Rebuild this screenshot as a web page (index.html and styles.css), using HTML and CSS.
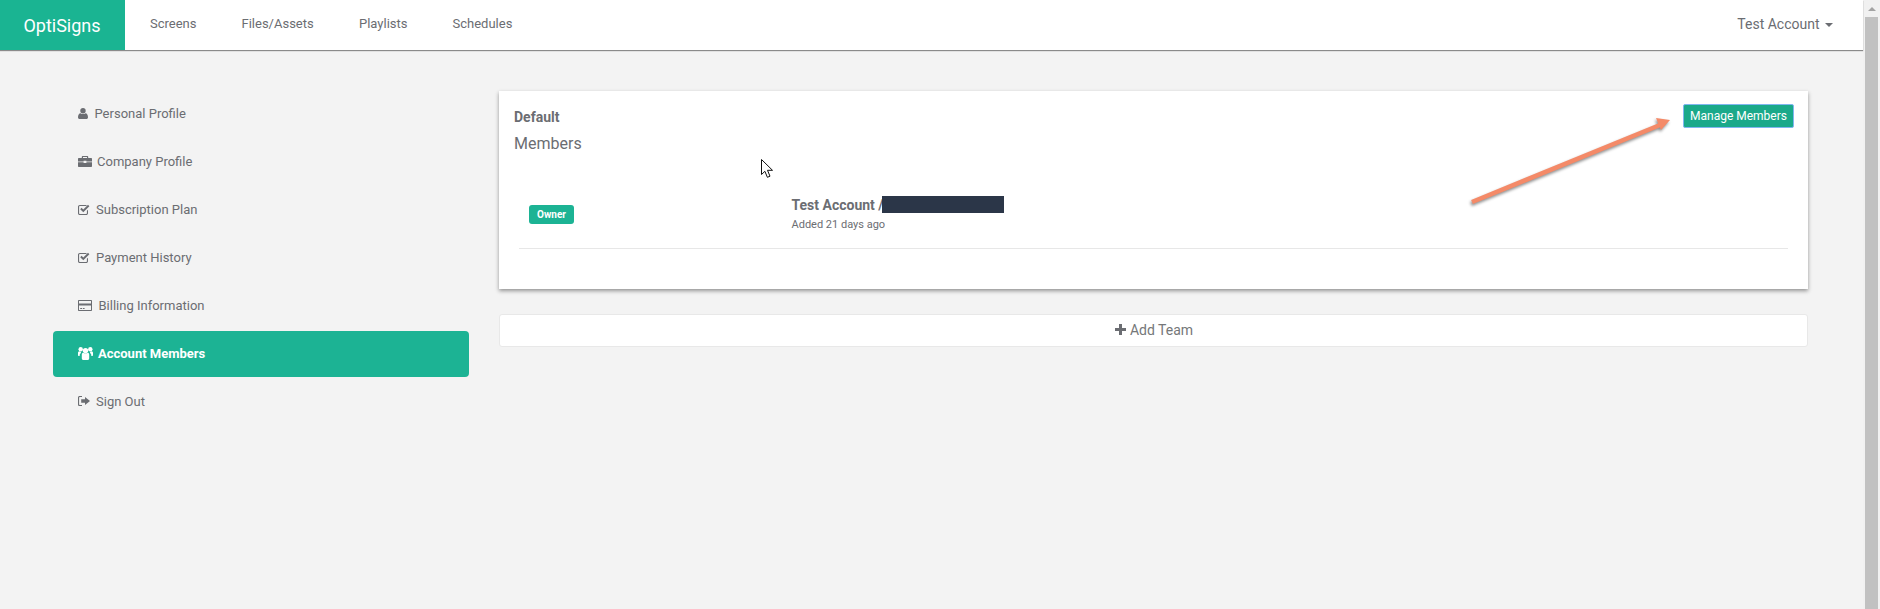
FILE: index.html
```html
<!DOCTYPE html>
<html lang="en">
<head>
<meta charset="utf-8">
<title>OptiSigns</title>
<link rel="stylesheet" href="styles.css">
</head>
<body>
<div class="page">
  <header class="nav">
    <a class="brand">OptiSigns</a>
    <ul class="menu">
      <li class="m-screens">Screens</li>
      <li class="m-files">Files/Assets</li>
      <li class="m-play">Playlists</li>
      <li class="m-sched">Schedules</li>
    </ul>
    <div class="account">Test Account <span class="caret"></span></div>
  </header>
  <main class="main">
    <ul class="side">
      <li class="side-item">
        <svg class="ic" width="10" height="11" viewBox="0 0 10 11"><circle cx="5" cy="2.8" r="2.7"/><path d="M0 9.2C0 6.8 1 5.4 2.6 5.2 3.3 5.8 4.1 6.1 5 6.1s1.7-.3 2.4-.9C9 5.4 10 6.8 10 9.2 10 10.3 9.3 11 8.3 11H1.700C.7 11 0 10.300 0 9.200Z"/></svg>
        <span class="t-user">Personal Profile</span>
      </li>
      <li class="side-item">
        <svg class="ic" width="14" height="11" viewBox="0 0 14 11"><path d="M5 2V1h4v1h1.200V.8c0-.5-.3-.8-.8-.8H4.600c-.5 0-.8.3-.8.8V2Z"/><path d="M1 2h12c.6 0 1 .4 1 1v2.400H8.400V4.800H5.600v.6H0V3c0-.6.4-1 1-1Z"/><path d="M0 6.200h5.600V7h2.800v-.8H14V10c0 .6-.4 1-1 1H1c-.6 0-1-.4-1-1Z"/></svg>
        <span class="t-case">Company Profile</span>
      </li>
      <li class="side-item">
        <svg class="ic" width="12" height="11" viewBox="0 0 12 11"><path d="M1.800 1H8.500v1.100H1.800c-.4 0-.7.3-.7.7v6.400c0 .4.300.7.700.7h6.400c.4 0 .7-.3.7-.7V6.800l1.100-1.100v3.500c0 1-.8 1.800-1.800 1.800H1.800C.8 11 0 10.200 0 9.200V2.800C0 1.800.8 1 1.800 1Z"/><path d="M2.200 5.200 3.600 3.800 5.300 5.500 10 .8 11.400 2.200 5.300 8.300Z"/></svg>
        <span class="t-check">Subscription Plan</span>
      </li>
      <li class="side-item">
        <svg class="ic" width="12" height="11" viewBox="0 0 12 11"><path d="M1.800 1H8.500v1.100H1.800c-.4 0-.7.3-.7.7v6.400c0 .4.300.7.700.7h6.400c.4 0 .7-.3.7-.7V6.800l1.100-1.100v3.500c0 1-.8 1.800-1.800 1.800H1.800C.8 11 0 10.200 0 9.200V2.800C0 1.800.8 1 1.800 1Z"/><path d="M2.200 5.200 3.600 3.800 5.300 5.500 10 .8 11.400 2.200 5.300 8.300Z"/></svg>
        <span class="t-check">Payment History</span>
      </li>
      <li class="side-item">
        <svg class="ic" width="14" height="11" viewBox="0 0 14 11"><path fill-rule="evenodd" d="M1 0h12c.6 0 1 .4 1 1v9c0 .6-.4 1-1 1H1c-.6 0-1-.4-1-1V1c0-.6.4-1 1-1ZM1 3.400h12V1H1ZM1 5.400V10h12V5.400ZM2.200 8h1.800v1H2.200Zm2.600 0h1.800v1H4.800Z"/></svg>
        <span class="t-card">Billing Information</span>
      </li>
      <li class="side-item active">
        <svg class="ic" width="15" height="13" viewBox="0 0 15 13"><circle cx="7.500" cy="3.600" r="2.700"/><circle cx="2.700" cy="2.300" r="2.200"/><circle cx="12.300" cy="2.300" r="2.200"/><path d="M3.800 7.400c0-1 .7-1.700 1.500-1.700.6.400 1.400.6 2.200.6s1.600-.2 2.200-.6c.8 0 1.500.7 1.500 1.700v3.800c0 1-.7 1.800-1.700 1.800H5.500c-1 0-1.700-.8-1.700-1.800Z"/><path d="M0 5.800C0 4.900.6 4.400 1.300 4.300c.4.300.9.500 1.400.5.300.5.400 1 .2 1.500-.8.300-1.200 1-1.200 1.800v.8H1c-.6 0-1-.4-1-1Z"/><path d="M15 5.800c0-.9-.6-1.400-1.300-1.500-.4.300-.9.500-1.400.5-.3.500-.4 1-.2 1.500.8.300 1.200 1 1.200 1.800v.8H14c.6 0 1-.4 1-1Z"/></svg>
        <span class="t-users">Account Members</span>
      </li>
      <li class="side-item">
        <svg class="ic" width="12" height="10" viewBox="0 0 12 10"><path d="M1.600 0H4v1.100H1.800c-.4 0-.7.3-.7.7v6.400c0 .4.300.7.700.7H4V10H1.600C.7 10 0 9.300 0 8.400V1.600C0 .7.700 0 1.600 0Z"/><path d="M7 1 12 5 7 9V6.700H3.200V3.300H7Z"/></svg>
        <span class="t-out">Sign Out</span>
      </li>
    </ul>
    <section class="content">
      <div class="card">
        <div class="card-head">
          <div class="titles">
            <div class="team">Default</div>
            <div class="sub">Members</div>
          </div>
          <button class="manage">Manage Members</button>
        </div>
        <div class="member">
          <div class="role"><span class="badge">Owner</span></div>
          <div class="who">
            <div class="name">Test Account /<span class="redact"></span></div>
            <div class="added">Added 21 days ago</div>
          </div>
        </div>
        <svg class="cursor" width="13" height="20" viewBox="0 0 13 20"><path d="M.5.5v15l3.400-3.200 2.500 6 2.600-1.100-2.500-5.900H11.500Z" fill="#fff" stroke="#111" stroke-width="1"/></svg>
        <svg class="arrow" width="210" height="95" viewBox="0 0 210 95"><path d="M4 92 192 15" stroke="#f48a68" stroke-width="4.500" fill="none"/><path d="M202 10 188 8 193 20Z" fill="#f48a68"/></svg>
      </div>
      <button class="add"><svg class="plus" width="11" height="11" viewBox="0 0 11 11"><path d="M4 0h3v4h4v3H7v4H4V7H0V4h4Z"/></svg> Add Team</button>
    </section>
  </main>
</div>
<div class="scrollbar">
  <div class="sb-up"><span class="sb-tri"></span></div>
  <div class="sb-thumb"></div>
</div>
</body>
</html>
```
FILE: styles.css
```css
* { box-sizing: border-box; }
html, body { margin: 0; height: 100%; overflow: hidden; }
body { display: flex; background: #f3f3f3; font-family: Roboto, "Liberation Sans", sans-serif; color: #6b6d72; font-size: 13px; }
ul { list-style: none; margin: 0; padding: 0; }
.page { flex: 1; min-width: 0; }

.nav { height: 50px; display: flex; align-items: stretch; background: #fff; box-shadow: 0 1px 1px #8a8a8a; position: relative; }
.brand { width: 125px; background: #1ab492; color: #fff; font-size: 18px; display: flex; align-items: center; justify-content: center; padding-right: 1px; }
.menu { display: flex; padding-left: 25px; font-size: 13px; padding-bottom: 3px; align-items: center; }
.m-screens { width: 91.5px; }
.m-files { width: 117.5px; }
.m-play { width: 93.5px; }
.account { margin-left: auto; padding-right: 30px; align-self: center; font-size: 14px; padding-bottom: 2px; }
.caret { display: inline-block; width: 0; height: 0; margin-left: 2px; vertical-align: middle; border-left: 4px solid transparent; border-right: 4px solid transparent; border-top: 4px solid #6b6d72; }

.main { display: flex; padding: 41px 55px 0 53px; }
.side { width: 416px; margin-right: 30px; display: flex; flex-direction: column; gap: 2px; flex: none; }
.side-item { height: 46px; display: flex; align-items: center; padding: 0 0 2px 25px; border-radius: 4px; }
.side-item .ic { fill: #6b6d72; flex: none; }
.t-user { margin-left: 6.5px; }
.t-case { margin-left: 5px; }
.t-check { margin-left: 6px; }
.t-card { margin-left: 6.5px; }
.t-users { margin-left: 5px; }
.t-out { margin-left: 6px; }
.active { background: #1cb394; color: #fff; font-weight: 700; }
.side-item.active .ic { fill: #fff; }

.content { flex: 1; min-width: 0; }
.card { position: relative; height: 198px; background: #fff; box-shadow: 0 2px 4px rgba(0, 0, 0, .4); padding: 13px 14px 0 15px; }
.card-head { display: flex; justify-content: space-between; align-items: flex-start; height: 58px; }
.team { font-weight: 700; font-size: 14px; line-height: 26px; }
.sub { font-size: 16px; line-height: 26px; margin-top: 1px; }
.manage { margin: 0; width: 111px; height: 24px; padding: 0; border: 1px solid #7fb6f0; border-radius: 2px; background: #1aa98a; color: #fff; font: 400 12px Roboto, sans-serif; }

.member { display: flex; margin: 0 6px 0 5px; height: 87px; padding-top: 34px; border-bottom: 1px solid #e7e7e7; }
.role { width: 272.500px; padding-left: 10px; padding-top: 9px; }
.badge { display: inline-flex; align-items: center; justify-content: center; width: 45px; height: 19px; border-radius: 3px; background: #1cb394; color: #fff; font-size: 10px; font-weight: 700; }
.name { display: flex; font-size: 14px; font-weight: 700; line-height: 18px; }
.redact { width: 122px; height: 17px; background: #2b3648; margin-left: -1.500px; }
.added { font-size: 11px; line-height: 20px; margin-top: 1px; }

.cursor { position: absolute; left: 262px; top: 68px; }
.arrow { position: absolute; left: 969px; top: 19px; filter: drop-shadow(-1px 2px 1.500px rgba(0, 0, 0, .45)); }

.add { display: flex; align-items: center; justify-content: center; gap: 4px; width: 100%; height: 33px; margin-top: 25px; padding: 0 0 2px 1px; background: #fff; border: 1px solid #e8e8e8; border-radius: 3px; color: #757779; font: 400 14px Roboto, sans-serif; }
.plus { fill: #6b6d72; }

.scrollbar { width: 17px; flex: none; background: #f1f1f1; padding-left: 2px; padding-right: 2px; }
.sb-up { height: 17px; display: flex; align-items: center; justify-content: center; }
.sb-tri { border-left: 4px solid transparent; border-right: 4px solid transparent; border-bottom: 4px solid #a3a3a3; }
.sb-thumb { height: 592px; background: #c1c1c1; }
```
